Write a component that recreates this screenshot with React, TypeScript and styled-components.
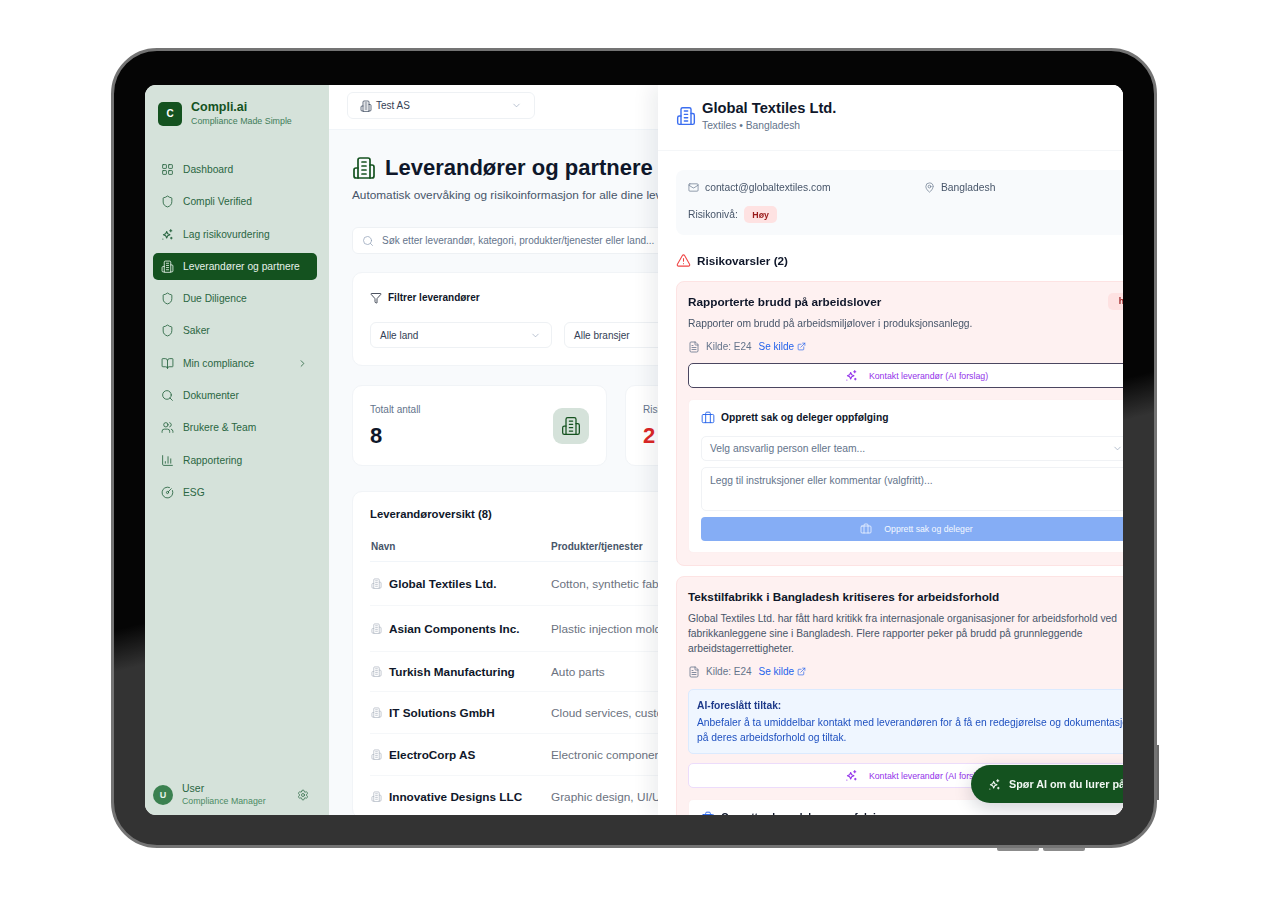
import styled, { createGlobalStyle } from 'styled-components';
import {
  BookOpen,
  Briefcase,
  ChartColumn,
  ChevronDown,
  ChevronRight,
  CircleGauge,
  ExternalLink,
  FileText,
  Funnel,
  LayoutGrid,
  Mail,
  MapPin,
  Search,
  Settings,
  Shield,
  TriangleAlert,
  Users,
} from 'lucide-react';

const Sparkle = ({ size = 13 }: { size?: number }) => (
  <svg width={size} height={size} viewBox='0 0 24 24' fill='none' stroke='currentColor' strokeWidth='2' strokeLinejoin='round' strokeLinecap='round'>
    <path d='M10.5 6.5l1.9 4.1 4.1 1.9-4.1 1.9-1.9 4.1-1.9-4.1-4.1-1.9 4.1-1.9z' />
    <path d='M18 3v4M16 5h4M19 17v3M17.5 18.500h3M3.500 20.500h.01' />
  </svg>
);

// tower with four window lines and two side wings
const Building = ({ size = 13, weight = 1.6 }: { size?: number; weight?: number }) => (
  <svg width={size} height={size} viewBox='0 0 24 24' fill='none' stroke='currentColor' strokeWidth={weight} strokeLinejoin='round' strokeLinecap='round'>
    <path d='M6 22V4a2 2 0 0 1 2-2h8a2 2 0 0 1 2 2v18Z' />
    <path d='M6 12H4a2 2 0 0 0-2 2v6a2 2 0 0 0 2 2h2' />
    <path d='M18 9h2a2 2 0 0 1 2 2v9a2 2 0 0 1-2 2h-2' />
    <path d='M10 6h4M10 10h4M10 14h4M10 18h4' />
  </svg>
);

const navItems = [
  { label: 'Dashboard', icon: <LayoutGrid size={13} strokeWidth={1.6} /> },
  { label: 'Compli Verified', icon: <Shield size={13} strokeWidth={1.6} /> },
  { label: 'Lag risikovurdering', icon: <Sparkle /> },
  { label: 'Leverandører og partnere', icon: <Building />, active: true },
  { label: 'Due Diligence', icon: <Shield size={13} strokeWidth={1.6} /> },
  { label: 'Saker', icon: <Shield size={13} strokeWidth={1.6} /> },
  { label: 'Min compliance', icon: <BookOpen size={13} strokeWidth={1.6} />, more: true },
  { label: 'Dokumenter', icon: <Search size={13} strokeWidth={1.6} /> },
  { label: 'Brukere & Team', icon: <Users size={13} strokeWidth={1.6} /> },
  { label: 'Rapportering', icon: <ChartColumn size={13} strokeWidth={1.6} /> },
  { label: 'ESG', icon: <CircleGauge size={13} strokeWidth={1.6} /> },
];

const suppliers = [
  { name: 'Global Textiles Ltd.', products: 'Cotton, synthetic fabrics', height: 44 },
  { name: 'Asian Components Inc.', products: 'Plastic injection molding', height: 46 },
  { name: 'Turkish Manufacturing', products: 'Auto parts', height: 40 },
  { name: 'IT Solutions GmbH', products: 'Cloud services, custom software', height: 42 },
  { name: 'ElectroCorp AS', products: 'Electronic components', height: 42 },
  { name: 'Innovative Designs LLC', products: 'Graphic design, UI/UX', height: 42 },
];

const CaseForm = () => (
  <CaseBox>
    <CaseTitle>
      <Briefcase size={14} strokeWidth={1.6} />
      <span>Opprett sak og deleger oppfølging</span>
    </CaseTitle>
    <CaseSelect>
      Velg ansvarlig person eller team...
      <ChevronDown size={11} strokeWidth={1.5} />
    </CaseSelect>
    <CaseText>Legg til instruksjoner eller kommentar (valgfritt)...</CaseText>
    <CaseButton>
      <Briefcase size={12} strokeWidth={1.5} />
      Opprett sak og deleger
    </CaseButton>
  </CaseBox>
);

const Source = () => (
  <SourceLine>
    <FileText size={12} strokeWidth={1.6} />
    <span>Kilde: E24</span>
    <SourceLink>
      Se kilde <ExternalLink size={9} strokeWidth={1.8} />
    </SourceLink>
  </SourceLine>
);

export default function App() {
  return (
    <Page>
      <GlobalStyle />
      <Device>
        <SideKey />
        <BottomKey $left={883} />
        <BottomKey $left={929} />
        <Screen>
          <Sidebar>
            <Brand>
              <BrandMark>C</BrandMark>
              <div>
                <BrandName>Compli.ai</BrandName>
                <BrandTag>Compliance Made Simple</BrandTag>
              </div>
            </Brand>
            <Nav>
              {navItems.map((item) => (
                <NavItem key={item.label} $active={item.active}>
                  {item.icon}
                  <span>{item.label}</span>
                  {item.more && (
                    <NavMore>
                      <ChevronRight size={11} strokeWidth={1.8} />
                    </NavMore>
                  )}
                </NavItem>
              ))}
            </Nav>
            <UserRow>
              <Avatar>U</Avatar>
              <UserText>
                <UserName>User</UserName>
                <UserRole>Compliance Manager</UserRole>
              </UserText>
              <Settings size={12} strokeWidth={1.5} />
            </UserRow>
          </Sidebar>

          <Main>
            <TopBar>
              <CompanySelect>
                <Building size={12} weight={1.5} />
                <span>Test AS</span>
                <ChevronDown size={11} strokeWidth={1.4} />
              </CompanySelect>
            </TopBar>
            <Content>
              <Heading>
                <Building size={24} weight={1.7} />
                <h1>Leverandører og partnere</h1>
              </Heading>
              <Lead>Automatisk overvåking og risikoinformasjon for alle dine leverandører og partnere</Lead>
              <SearchBar>
                <Search size={12} strokeWidth={1.5} />
                Søk etter leverandør, kategori, produkter/tjenester eller land...
              </SearchBar>
              <FilterCard>
                <FilterTitle>
                  <Funnel size={12} strokeWidth={1.5} />
                  Filtrer leverandører
                </FilterTitle>
                <FilterRow>
                  <FilterSelect>
                    Alle land
                    <ChevronDown size={11} strokeWidth={1.4} />
                  </FilterSelect>
                  <FilterSelect>
                    Alle bransjer
                    <ChevronDown size={11} strokeWidth={1.4} />
                  </FilterSelect>
                </FilterRow>
              </FilterCard>
              <Stats>
                <StatCard>
                  <div>
                    <StatLabel>Totalt antall</StatLabel>
                    <StatValue>8</StatValue>
                  </div>
                  <StatIcon>
                    <Building size={20} weight={1.5} />
                  </StatIcon>
                </StatCard>
                <StatCard>
                  <div>
                    <StatLabel>Risikoleverandører</StatLabel>
                    <StatValue $danger>2</StatValue>
                  </div>
                </StatCard>
              </Stats>
              <TableCard>
                <TableTitle>Leverandøroversikt (8)</TableTitle>
                <TableHead>
                  <span>Navn</span>
                  <span>Produkter/tjenester</span>
                </TableHead>
                {suppliers.map((s) => (
                  <TableRow key={s.name} $height={s.height}>
                    <RowName>
                      <Building size={11} />
                      <strong>{s.name}</strong>
                    </RowName>
                    <RowProducts>{s.products}</RowProducts>
                  </TableRow>
                ))}
              </TableCard>
            </Content>
          </Main>

          <Drawer>
            <DrawerHead>
              <Building size={20} weight={1.7} />
              <div>
                <DrawerName>Global Textiles Ltd.</DrawerName>
                <DrawerSub>Textiles • Bangladesh</DrawerSub>
              </div>
            </DrawerHead>
            <DrawerBody>
              <InfoBox>
                <InfoGrid>
                  <InfoItem>
                    <Mail size={11} strokeWidth={1.5} />
                    contact@globaltextiles.com
                  </InfoItem>
                  <InfoItem>
                    <MapPin size={11} strokeWidth={1.5} />
                    Bangladesh
                  </InfoItem>
                </InfoGrid>
                <RiskLine>
                  Risikonivå:
                  <Badge>Høy</Badge>
                </RiskLine>
              </InfoBox>
              <AlertsTitle>
                <TriangleAlert size={15} strokeWidth={1.7} />
                Risikovarsler (2)
              </AlertsTitle>

              <AlertCard>
                <AlertHead>
                  <AlertTitle>Rapporterte brudd på arbeidslover</AlertTitle>
                  <Badge $wide>høy</Badge>
                </AlertHead>
                <AlertText>Rapporter om brudd på arbeidsmiljølover i produksjonsanlegg.</AlertText>
                <Source />
                <AiButton $focused>
                  <Sparkle size={13} />
                  <span>Kontakt leverandør (AI forslag)</span>
                </AiButton>
                <CaseForm />
              </AlertCard>

              <AlertCard>
                <AlertHead>
                  <AlertTitle>Tekstilfabrikk i Bangladesh kritiseres for arbeidsforhold</AlertTitle>
                </AlertHead>
                <AlertText>
                  Global Textiles Ltd. har fått hard kritikk fra internasjonale organisasjoner for arbeidsforhold ved
                  fabrikkanleggene sine i Bangladesh. Flere rapporter peker på brudd på grunnleggende
                  arbeidstagerrettigheter.
                </AlertText>
                <Source />
                <Suggestion>
                  <strong>AI-foreslått tiltak:</strong>
                  <p>
                    Anbefaler å ta umiddelbar kontakt med leverandøren for å få en redegjørelse og dokumentasjon på
                    deres arbeidsforhold og tiltak.
                  </p>
                </Suggestion>
                <AiButton>
                  <Sparkle size={13} />
                  <span>Kontakt leverandør (AI forslag)</span>
                </AiButton>
                <CaseForm />
              </AlertCard>
            </DrawerBody>
          </Drawer>

          <AskAi>
            <Sparkle size={13} />
            Spør AI om du lurer på noe
          </AskAi>
        </Screen>
      </Device>
    </Page>
  );
}

const GlobalStyle = createGlobalStyle`
  html, body {
    margin: 0;
    background: #fff;
    font-family: 'Liberation Sans', Arial, sans-serif;
  }
  * {
    box-sizing: border-box;
  }
`;

const Page = styled.div`
  height: 900px;
  padding: 48px 0 0 111px;
  overflow: hidden;
  filter: blur(0.35px);
`;

const Device = styled.div`
  position: relative;
  width: 1046px;
  height: 800px;
  padding: 34px 31px 30px;
  border: 3px solid #747474;
  border-radius: 46px;
  background: linear-gradient(166deg, #050505 0 55%, #333 59% 100%);
`;

const SideKey = styled.div`
  position: absolute;
  right: -5px;
  top: 694px;
  width: 2px;
  height: 55px;
  background: #6a6a6a;
`;

const BottomKey = styled.div<{ $left: number }>`
  position: absolute;
  left: ${(p) => p.$left}px;
  bottom: -6px;
  width: 42px;
  height: 3px;
  border-radius: 0 0 2px 2px;
  background: #8b8b8b;
`;

const Screen = styled.div`
  position: relative;
  display: flex;
  width: 978px;
  height: 730px;
  overflow: hidden;
  border-radius: 11px;
  background: #fff;
`;

const Sidebar = styled.aside`
  flex: 0 0 184px;
  display: flex;
  flex-direction: column;
  padding: 15px 12px 7px 8px;
  background: #d5e2da;
  color: #2d6a45;
`;

const Brand = styled.div`
  display: flex;
  align-items: center;
  gap: 9px;
  padding-left: 5px;
`;

const BrandMark = styled.div`
  width: 24px;
  height: 24px;
  display: grid;
  place-items: center;
  border-radius: 5px;
  background: #14521f;
  color: #fff;
  font-size: 10px;
  font-weight: 700;
`;

const BrandName = styled.div`
  color: #14521f;
  font-size: 12.5px;
  font-weight: 700;
  line-height: 14px;
`;

const BrandTag = styled.div`
  margin-top: 2px;
  color: #3f7d59;
  font-size: 8.85px;
  line-height: 11px;
  white-space: nowrap;
`;

const Nav = styled.nav`
  display: flex;
  flex-direction: column;
  gap: 5.3px;
  margin-top: 29px;
`;

const NavItem = styled.div<{ $active?: boolean }>`
  display: flex;
  align-items: center;
  gap: 9px;
  height: 27px;
  padding: 0 9px 0 8px;
  border-radius: 5px;
  background: ${(p) => (p.$active ? '#14521f' : 'transparent')};
  color: ${(p) => (p.$active ? '#e6f1ea' : '#2a6642')};
  font-size: 10.25px;
`;

const NavMore = styled.span`
  display: flex;
  margin-left: auto;
`;

const UserRow = styled.div`
  display: flex;
  align-items: center;
  gap: 9px;
  margin-top: auto;
  padding-right: 8px;
`;

const Avatar = styled.div`
  width: 20px;
  height: 20px;
  display: grid;
  place-items: center;
  border-radius: 50%;
  background: #3b8150;
  color: #e6f1ea;
  font-size: 9px;
  font-weight: 700;
`;

const UserText = styled.div`
  flex: 1;
`;

const UserName = styled.div`
  color: #2a6642;
  font-size: 10.5px;
  line-height: 13px;
`;

const UserRole = styled.div`
  color: #4b8a63;
  font-size: 8.8px;
  line-height: 13px;
  white-space: nowrap;
`;

const Main = styled.main`
  flex: 1;
  min-width: 0;
  display: flex;
  flex-direction: column;
  overflow: hidden;
  background: #f8fafc;
`;

const TopBar = styled.div`
  flex: 0 0 45px;
  padding: 7px 0 0 18px;
  background: #fff;
  border-bottom: 1px solid #f1f5f9;
`;

const CompanySelect = styled.div`
  width: 188px;
  height: 27px;
  display: flex;
  align-items: center;
  gap: 4px;
  padding: 0 12px;
  border: 1px solid #eef1f4;
  border-radius: 6px;
  color: #334155;
  font-size: 10px;
  svg:last-child {
    margin-left: auto;
    color: #94a3b8;
  }
`;

const Content = styled.div`
  flex: 1;
  padding: 25px 23px 0;
`;

const Heading = styled.div`
  display: flex;
  align-items: center;
  gap: 9px;
  height: 26px;
  color: #14521f;
  h1 {
    margin: 0;
    color: #0f172a;
    font-size: 22px;
    font-weight: 700;
    white-space: nowrap;
  }
`;

const Lead = styled.p`
  margin: 6px 0 0;
  color: #475569;
  font-size: 11.8px;
  line-height: 16px;
  white-space: nowrap;
`;

const SearchBar = styled.div`
  display: flex;
  align-items: center;
  gap: 8px;
  height: 27px;
  margin-top: 24px;
  padding-left: 9px;
  border: 1px solid #eef1f4;
  border-radius: 6px;
  background: #fff;
  color: #64748b;
  font-size: 10px;
  svg {
    color: #94a3b8;
  }
`;

const FilterCard = styled.section`
  height: 94px;
  margin-top: 18px;
  padding: 17px 17px 0;
  border: 1px solid #f1f4f7;
  border-radius: 10px;
  background: #fff;
`;

const FilterTitle = styled.div`
  display: flex;
  align-items: center;
  gap: 6px;
  color: #0f172a;
  font-size: 10px;
  font-weight: 700;
  line-height: 16px;
`;

const FilterRow = styled.div`
  display: grid;
  grid-template-columns: repeat(2, 182px);
  gap: 12px;
  margin-top: 16px;
`;

const FilterSelect = styled.div`
  height: 26px;
  display: flex;
  align-items: center;
  justify-content: space-between;
  padding: 0 10px 0 9px;
  border: 1px solid #eef1f4;
  border-radius: 6px;
  color: #334155;
  font-size: 10px;
  svg {
    color: #94a3b8;
  }
`;

const Stats = styled.div`
  display: grid;
  grid-template-columns: repeat(2, 255px);
  gap: 18px;
  margin-top: 19px;
`;

const StatCard = styled.div`
  height: 81px;
  display: flex;
  align-items: center;
  justify-content: space-between;
  padding: 0 17px;
  border: 1px solid #f1f4f7;
  border-radius: 10px;
  background: #fff;
`;

const StatLabel = styled.div`
  color: #64748b;
  font-size: 10px;
  line-height: 14px;
`;

const StatValue = styled.div<{ $danger?: boolean }>`
  margin-top: 7px;
  color: ${(p) => (p.$danger ? '#dc2626' : '#0f172a')};
  font-size: 22px;
  font-weight: 700;
  line-height: 24px;
`;

const StatIcon = styled.div`
  width: 36px;
  height: 36px;
  display: grid;
  place-items: center;
  border-radius: 9px;
  background: #d5e2da;
  color: #14521f;
`;

const TableCard = styled.section`
  margin-top: 25px;
  padding: 14px 17px 0;
  border: 1px solid #f1f4f7;
  border-radius: 10px;
  background: #fff;
`;

const TableTitle = styled.div`
  color: #0f172a;
  font-size: 11.3px;
  font-weight: 700;
  line-height: 16px;
`;

const TableHead = styled.div`
  display: grid;
  grid-template-columns: 180px 1fr;
  align-items: center;
  height: 32px;
  margin-top: 8px;
  padding: 1px 0 0 1px;
  border-bottom: 1px solid #f1f5f9;
  color: #475569;
  font-size: 10px;
  font-weight: 700;
`;

const TableRow = styled.div<{ $height: number }>`
  display: grid;
  grid-template-columns: 181px 1fr;
  align-items: center;
  height: ${(p) => p.$height}px;
  border-bottom: 1px solid #f5f7f9;
`;

const RowName = styled.div`
  display: flex;
  align-items: center;
  gap: 7px;
  padding-left: 1px;
  color: #0f172a;
  font-size: 11.75px;
  svg {
    color: #b0b8c2;
  }
`;

const RowProducts = styled.div`
  color: #6b7280;
  font-size: 11.8px;
  white-space: nowrap;
`;

const Drawer = styled.aside`
  position: absolute;
  top: 0;
  bottom: 0;
  left: 513px;
  width: 518px;
  background: #fff;
  box-shadow: -8px 0 18px rgba(15, 23, 42, 0.07);
`;

const DrawerHead = styled.header`
  height: 66px;
  display: flex;
  align-items: center;
  gap: 6px;
  padding: 0 18px 4px;
  border-bottom: 1px solid #f4f6f8;
  color: #3b6ef0;
`;

const DrawerName = styled.div`
  color: #0f172a;
  font-size: 14.7px;
  font-weight: 700;
  line-height: 18px;
`;

const DrawerSub = styled.div`
  margin-top: 2px;
  color: #64748b;
  font-size: 10.3px;
  line-height: 14px;
`;

const DrawerBody = styled.div`
  padding: 19px 18px 0;
`;

const InfoBox = styled.div`
  height: 65px;
  padding: 10px 12px 0;
  border-radius: 8px;
  background: #f8fafc;
`;

const InfoGrid = styled.div`
  display: grid;
  grid-template-columns: 1fr 1fr;
  gap: 14px;
`;

const InfoItem = styled.div`
  display: flex;
  align-items: center;
  gap: 6px;
  color: #475569;
  font-size: 10.3px;
  line-height: 15px;
  svg {
    color: #64748b;
  }
`;

const RiskLine = styled.div`
  display: flex;
  align-items: center;
  gap: 6px;
  margin-top: 11px;
  color: #475569;
  font-size: 10.3px;
`;

const Badge = styled.span<{ $wide?: boolean }>`
  height: 17px;
  display: inline-flex;
  align-items: center;
  padding: 0 ${(p) => (p.$wide ? '10.5px' : '8.5px')};
  border-radius: 5px;
  background: #fee2e2;
  color: #991b1b;
  font-size: 8.8px;
  font-weight: 700;
`;

const AlertsTitle = styled.div`
  display: flex;
  align-items: center;
  gap: 6px;
  height: 18px;
  margin-top: 16px;
  color: #0f172a;
  font-size: 11.7px;
  font-weight: 700;
  svg {
    color: #ef4444;
  }
`;

const AlertCard = styled.section`
  margin-top: 12px;
  padding: 11px 12px 12px 11px;
  border: 1px solid #fde3e3;
  border-radius: 8px;
  background: #fef1f1;
  & + & {
    margin-top: 10px;
  }
`;

const AlertHead = styled.div`
  display: flex;
  align-items: center;
  justify-content: space-between;
  height: 16px;
`;

const AlertTitle = styled.div`
  color: #0f172a;
  font-size: 11.75px;
  font-weight: 700;
`;

const AlertText = styled.p`
  margin: 7px 0 0;
  color: #475569;
  font-size: 10.3px;
  line-height: 15px;
`;

const SourceLine = styled.div`
  display: flex;
  align-items: center;
  gap: 6px;
  margin-top: 8px;
  color: #64748b;
  font-size: 10px;
  line-height: 15px;
`;

const SourceLink = styled.span`
  display: inline-flex;
  align-items: center;
  gap: 3px;
  margin-left: 1px;
  color: #2563eb;
`;

const AiButton = styled.div<{ $focused?: boolean }>`
  height: 25px;
  display: flex;
  align-items: center;
  justify-content: center;
  gap: 11px;
  margin-top: 9px;
  border: 1px solid ${(p) => (p.$focused ? '#4b4660' : '#ecdcfb')};
  border-radius: 5px;
  background: #fff;
  color: #9333ea;
  font-size: 8.75px;
`;

const CaseBox = styled.div`
  height: 154px;
  margin-top: 11px;
  padding: 10px 12px 0;
  border: 1px solid #fdf0f0;
  border-radius: 5px;
  background: #fff;
`;

const CaseTitle = styled.div`
  display: flex;
  align-items: center;
  gap: 6px;
  color: #2563eb;
  line-height: 16px;
  span {
    color: #0f172a;
    font-size: 10.25px;
    font-weight: 700;
  }
`;

const CaseSelect = styled.div`
  height: 25px;
  display: flex;
  align-items: center;
  justify-content: space-between;
  margin-top: 10px;
  padding: 0 8px;
  border: 1px solid #f0f2f5;
  border-radius: 5px;
  color: #64748b;
  font-size: 10.3px;
  svg {
    color: #94a3b8;
  }
`;

const CaseText = styled.div`
  height: 44px;
  margin-top: 6px;
  padding: 6px 8px;
  border: 1px solid #f0f2f5;
  border-radius: 5px;
  color: #64748b;
  font-size: 10.3px;
  line-height: 14px;
`;

const CaseButton = styled.div`
  height: 24px;
  display: flex;
  align-items: center;
  justify-content: center;
  gap: 12px;
  margin-top: 6px;
  border-radius: 4px;
  background: #85adf5;
  color: #f4f8ff;
  font-size: 8.7px;
`;

const Suggestion = styled.div`
  height: 65px;
  margin-top: 10px;
  padding: 8px 8px 0;
  border: 1px solid #dbeafe;
  border-radius: 5px;
  background: #eff6ff;
  strong {
    display: block;
    color: #1e3a8a;
    font-size: 10.25px;
    line-height: 15px;
  }
  p {
    margin: 2px 0 0;
    color: #1e50c0;
    font-size: 10.3px;
    line-height: 15px;
  }
`;

const AskAi = styled.div`
  position: absolute;
  left: 826px;
  top: 680px;
  width: 200px;
  height: 38px;
  display: flex;
  align-items: center;
  gap: 8px;
  padding-left: 17px;
  border-radius: 19px;
  background: #14521f;
  box-shadow: 0 6px 18px rgba(15, 23, 42, 0.18);
  color: #f1f7f3;
  font-size: 10.8px;
  font-weight: 700;
  white-space: nowrap;
`;
